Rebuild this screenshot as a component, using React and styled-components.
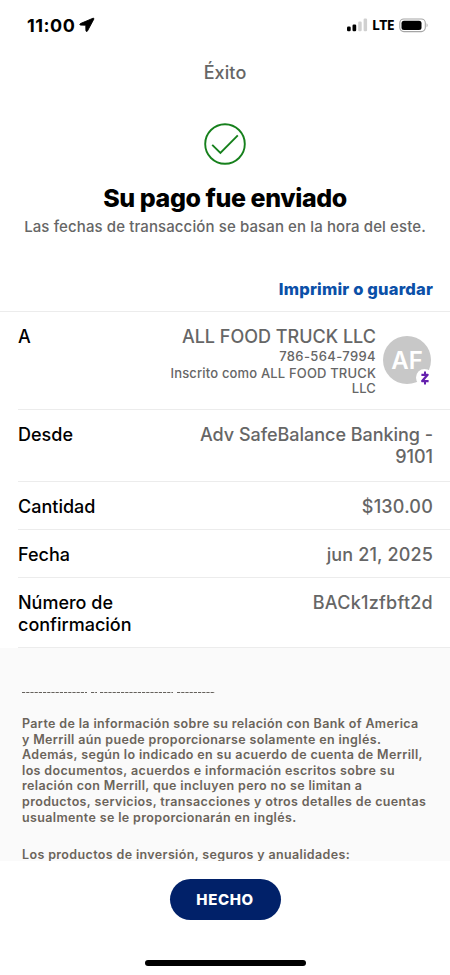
import React from 'react';
import styled, { createGlobalStyle } from 'styled-components';

const colors = {
  mainColor: '#012169',
  linkColor: '#0b50a8',
  textColor: '#000000',
  subTextColor: '#666666',
  legalTextColor: '#6b645a',
  legalBackground: '#fafafa',
  lineColor: '#ececec',
  successColor: '#16801c',
};

const details = [
  { label: 'Desde', value: ['Adv SafeBalance Banking -', '9101'], height: 72, spacing: '-0.03px' },
  { label: 'Cantidad', value: ['$130.00'], height: 48, spacing: '0.2px' },
  { label: 'Fecha', value: ['jun 21, 2025'], height: 48, spacing: '0.15px' },
  { label: 'Número de confirmación', value: ['BACk1zfbft2d'], height: 70, spacing: '0.25px' },
];

const legalLines = [
  'Parte de la información sobre su relación con Bank of America',
  'y Merrill aún puede proporcionarse solamente en inglés.',
  'Además, según lo indicado en su acuerdo de cuenta de Merrill,',
  'los documentos, acuerdos e información escritos sobre su',
  'relación con Merrill, que incluyen pero no se limitan a',
  'productos, servicios, transacciones y otros detalles de cuentas',
  'usualmente se le proporcionarán en inglés.',
];

const StatusBar = () => {
  return (
    <StStatusBar>
      <StTime>
        11:00
        <svg width="16" height="16" viewBox="0 0 16 16">
          <path
            d="M14.1 1.2 1.4 6.6c-.9.4-.7 1.5.2 1.5l5.2.1.1 5.4c0 1 1.2 1.2 1.6.3L14.9 2c.2-.6-.3-1-.8-.8Z"
            fill="#000"
            stroke="#000"
            strokeWidth="0.9"
          />
        </svg>
      </StTime>
      <StSignals>
        <svg width="21" height="14" viewBox="0 0 21 14">
          <rect x="0" y="8.5" width="3.7" height="4.8" rx="1.2" />
          <rect x="5.5" y="6.5" width="3.7" height="6.8" rx="1.2" />
          <rect x="11.2" y="3.5" width="3.5" height="9.8" rx="1.2" fill="#d0d0d0" />
          <rect x="16.6" y="0.6" width="3.5" height="12.7" rx="1.2" fill="#d0d0d0" />
        </svg>
        <StNetwork>LTE</StNetwork>
        <svg width="30" height="15" viewBox="0 0 30 15">
          <rect x="0.8" y="1" width="25.5" height="12.6" rx="4" fill="none" stroke="#a5a5a5" strokeWidth="1.1" />
          <rect x="2.5" y="2.7" width="20" height="9.2" rx="2.5" />
          <path d="M27.6 5.3c1.3.6 1.3 3.4 0 4Z" fill="#a5a5a5" />
        </svg>
      </StSignals>
    </StStatusBar>
  );
};

const App = () => {
  return (
    <StScreen>
      <GlobalStyle />
      <StatusBar />
      <StPageTitle>Éxito</StPageTitle>

      <StResult>
        <svg width="42" height="42" viewBox="0 0 42 42" fill="none" stroke={colors.successColor}>
          <circle cx="21" cy="21" r="19.8" strokeWidth="1.9" />
          <path d="M8.2 21.8 16.4 30 33.8 12.3" strokeWidth="1.9" />
        </svg>
        <StHeadline>Su pago fue enviado</StHeadline>
        <StNotice>Las fechas de transacción se basan en la hora del este.</StNotice>
      </StResult>

      <StPrintLink>Imprimir o guardar</StPrintLink>

      <StDetails>
        <StRow $height={98}>
          <StLabel>A</StLabel>
          <StRecipient>
            <StRecipientInfo>
              <StRecipientName>ALL FOOD TRUCK LLC</StRecipientName>
              <StPhone>786-564-7994</StPhone>
              <StEnrolled>
                Inscrito como ALL FOOD TRUCK
                <br />
                LLC
              </StEnrolled>
            </StRecipientInfo>
            <StAvatar>
              AF
              <StZelleBadge>
                <svg width="10" height="14" viewBox="0 0 10 14" fill="none" stroke="#6420ad">
                  <path d="M1.4 3.8H7.6L2.2 10.1H8.6" strokeWidth="2.3" strokeLinejoin="round" />
                  <path d="M5 0.6V3.5M5 10.3V13.4" strokeWidth="2" />
                </svg>
              </StZelleBadge>
            </StAvatar>
          </StRecipient>
        </StRow>
        {details.map((item) => (
          <StRow key={item.label} $height={item.height}>
            <StLabel>{item.label}</StLabel>
            <StValue $spacing={item.spacing}>
              {item.value.map((line) => (
                <div key={line}>{line}</div>
              ))}
            </StValue>
          </StRow>
        ))}
      </StDetails>

      <StLegal>
        {/* top edge of the link that scrolls out of view */}
        <StCutLine width="194" height="4" viewBox="0 0 194 4" fill="none" stroke="#65615c">
          <path d="M0 2.5H65M69 2.5H75M78 2.5H151M155 2.5H193" strokeWidth="1" strokeDasharray="3.2 1" />
        </StCutLine>
        <StLegalText>
          {legalLines.map((line) => (
            <div key={line}>{line}</div>
          ))}
        </StLegalText>
        <StLegalText>Los productos de inversión, seguros y anualidades:</StLegalText>
      </StLegal>

      <StFooter>
        <StDoneButton>HECHO</StDoneButton>
        <StHomeIndicator />
      </StFooter>
    </StScreen>
  );
};

const GlobalStyle = createGlobalStyle`
  * {
    box-sizing: border-box;
  }

  body {
    margin: 0;
    background: white;
  }
`;

const StScreen = styled.div`
  width: 450px;
  height: 975px;
  display: flex;
  flex-direction: column;
  overflow: hidden;
  background-color: white;
  color: ${colors.textColor};
  font-family: Inter, 'Liberation Sans', sans-serif;
  white-space: nowrap;
`;

const StStatusBar = styled.div`
  height: 50px;
  flex-shrink: 0;
  display: flex;
  justify-content: space-between;
  align-items: center;
  padding: 0 21px 0 27px;
`;

const StTime = styled.div`
  display: flex;
  align-items: center;
  gap: 4px;
  font-size: 18px;
  font-weight: 700;
  letter-spacing: 0.5px;
`;

const StSignals = styled.div`
  display: flex;
  align-items: center;
  gap: 4px;
`;

const StNetwork = styled.span`
  width: 23px;
  font-family: 'Noto Sans', sans-serif;
  font-size: 14px;
  font-weight: 700;
  line-height: 16px;
  letter-spacing: -0.4px;
`;

const StPageTitle = styled.div`
  height: 44px;
  flex-shrink: 0;
  line-height: 46px;
  text-align: center;
  font-size: 18px;
  font-weight: 500;
  letter-spacing: 0.1px;
  color: ${colors.subTextColor};
`;

const StResult = styled.div`
  height: 177px;
  flex-shrink: 0;
  display: flex;
  flex-direction: column;
  align-items: center;
  padding-top: 29px;
`;

const StHeadline = styled.h1`
  margin: 18px 0 0;
  font-size: 25px;
  font-weight: 800;
  line-height: 31px;
  letter-spacing: -0.4px;
`;

const StNotice = styled.div`
  font-size: 15px;
  font-weight: 500;
  line-height: 26px;
  letter-spacing: 0.11px;
  color: ${colors.subTextColor};
`;

const StPrintLink = styled.div`
  height: 40px;
  flex-shrink: 0;
  padding: 7px 17px 0 0;
  text-align: right;
  line-height: 22px;
  font-size: 16.5px;
  font-weight: 800;
  letter-spacing: 0.18px;
  color: ${colors.linkColor};
`;

const StDetails = styled.div`
  flex-shrink: 0;
  border-top: 1px solid ${colors.lineColor};
`;

const StRow = styled.div`
  height: ${(props) => props.$height}px;
  margin-left: 18px;
  padding: 14px 17px 0 0;
  display: flex;
  justify-content: space-between;
  border-bottom: 1px solid ${colors.lineColor};
`;

const StLabel = styled.div`
  width: 130px;
  white-space: normal;
  font-size: 18px;
  font-weight: 500;
  line-height: 22px;
`;

const StValue = styled.div`
  text-align: right;
  font-size: 18px;
  font-weight: 500;
  line-height: 22px;
  letter-spacing: ${(props) => props.$spacing};
  color: ${colors.subTextColor};
`;

const StRecipient = styled.div`
  display: flex;
  gap: 7px;
  margin-right: 2px;
`;

const StRecipientInfo = styled.div`
  text-align: right;
  font-weight: 500;
  color: ${colors.subTextColor};
`;

const StRecipientName = styled.div`
  font-size: 18px;
  line-height: 22px;
`;

const StPhone = styled.div`
  font-size: 13px;
  line-height: 17px;
  letter-spacing: 0.38px;
`;

const StEnrolled = styled.div`
  padding-top: 1px;
  font-size: 13px;
  line-height: 15px;
  letter-spacing: 0.16px;
`;

const StAvatar = styled.div`
  position: relative;
  width: 48px;
  height: 48px;
  margin-top: 10px;
  border-radius: 50%;
  display: flex;
  align-items: center;
  justify-content: center;
  background-color: #c8c8c8;
  color: white;
  font-size: 24px;
  font-weight: 600;
`;

const StZelleBadge = styled.div`
  position: absolute;
  right: -2px;
  bottom: -2px;
  width: 17px;
  height: 17px;
  border-radius: 50%;
  display: flex;
  align-items: center;
  justify-content: center;
  background-color: white;
`;

const StLegal = styled.div`
  height: 213px;
  flex-shrink: 0;
  padding: 42px 22px 0;
  background-color: ${colors.legalBackground};
  overflow: hidden;
`;

const StCutLine = styled.svg`
  display: block;
  margin-bottom: 22px;
`;

const StLegalText = styled.div`
  margin-bottom: 22px;
  font-size: 12.5px;
  font-weight: 600;
  line-height: 15.6px;
  letter-spacing: 0.36px;
  color: ${colors.legalTextColor};
`;

const StFooter = styled.div`
  flex: 1;
  display: flex;
  flex-direction: column;
  align-items: center;
  padding-top: 18px;
`;

const StDoneButton = styled.button`
  width: 111px;
  height: 41px;
  padding: 0;
  border: none;
  border-radius: 21px;
  background-color: ${colors.mainColor};
  color: white;
  font-family: inherit;
  font-size: 15px;
  font-weight: 800;
  letter-spacing: 0.6px;
`;

const StHomeIndicator = styled.div`
  width: 161px;
  height: 6px;
  margin-top: 40px;
  border-radius: 3px;
  background-color: black;
`;

export default App;
